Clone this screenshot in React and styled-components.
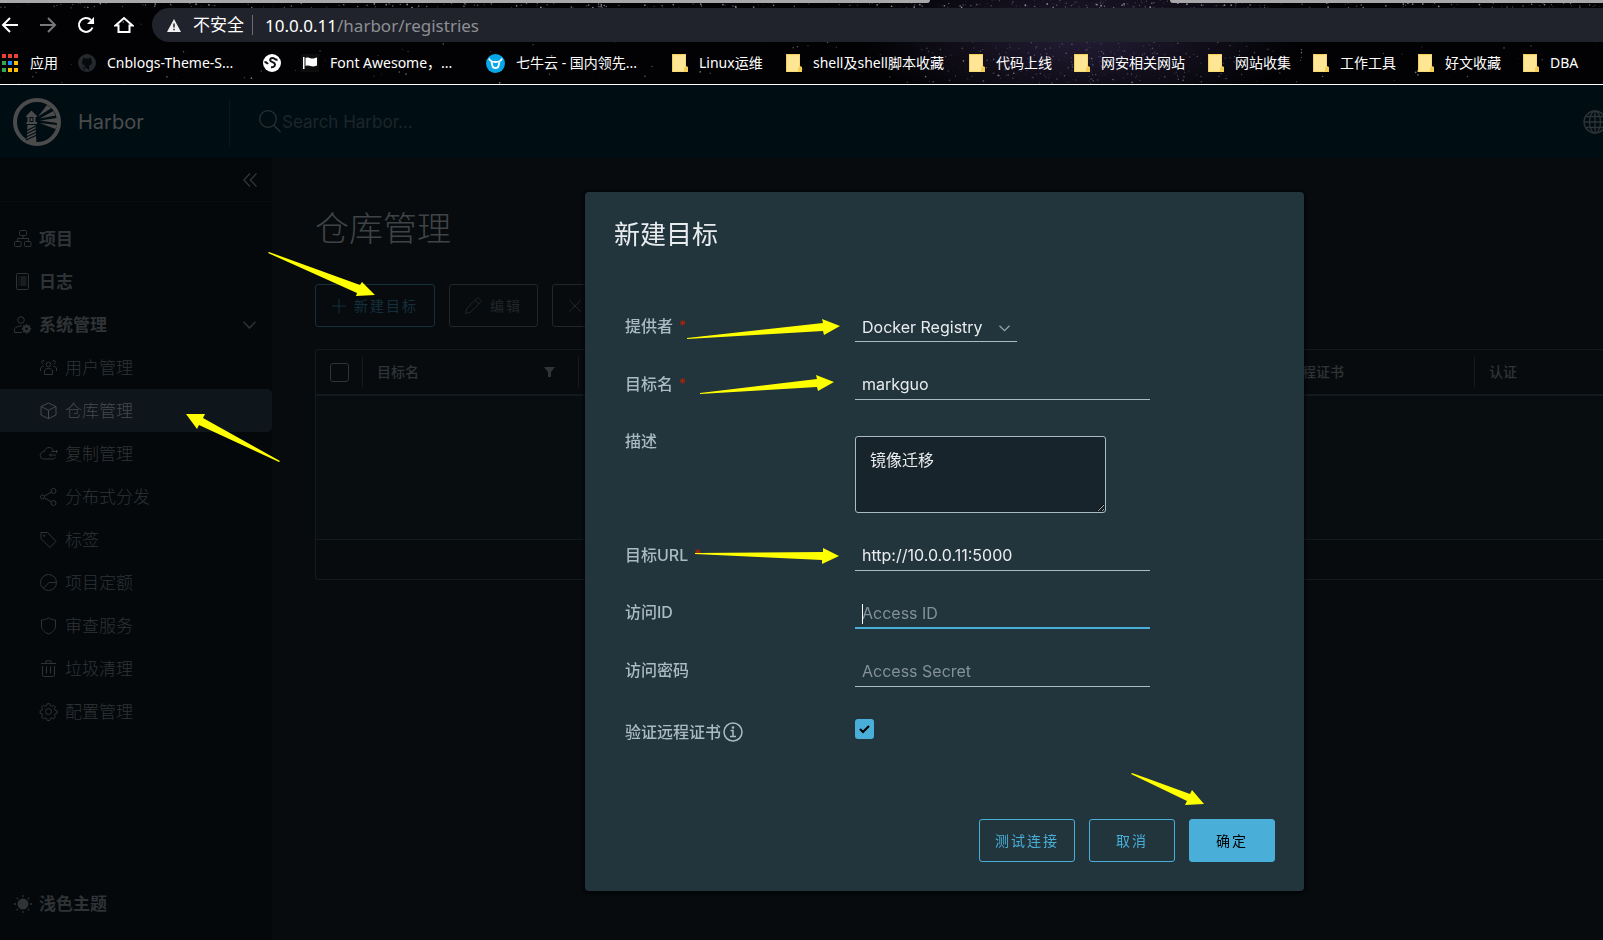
import styled, { createGlobalStyle, css } from "styled-components"

const GlobalStyle = createGlobalStyle`
*{
    box-sizing:border-box;
}
body{
    margin:0;
    background:#070b0e;
    font-family:Inter, "Noto Sans CJK SC", sans-serif;
    font-size:16px;
    overflow:hidden;
}
button, input, select, textarea{
    font-family:inherit;
    margin:0;
}
`

/* ---------- data ---------- */

const bookmarks = [
    { icon: "apps", text: "应用", room: 28 },
    { icon: "github", text: "Cnblogs-Theme-S...", room: 136 },
    { icon: "globe", text: "" },
    { icon: "flag", text: "Font Awesome，...", room: 136 },
    { icon: "qiniu", text: "七牛云 - 国内领先...", room: 136 },
    { icon: "folder", text: "Linux运维", room: 67 },
    { icon: "folder", text: "shell及shell脚本收藏", room: 136 },
    { icon: "folder", text: "代码上线", room: 58 },
    { icon: "folder", text: "网安相关网站", room: 87 },
    { icon: "folder", text: "网站收集", room: 58 },
    { icon: "folder", text: "工作工具", room: 58 },
    { icon: "folder", text: "好文收藏", room: 58 },
    { icon: "folder", text: "DBA", room: 28 },
]

const topMenu = [
    { icon: "project", text: "项目" },
    { icon: "log", text: "日志" },
    { icon: "admin", text: "系统管理", open: true },
]

const subMenu = [
    { icon: "users", text: "用户管理" },
    { icon: "cube", text: "仓库管理", active: true },
    { icon: "cloud", text: "复制管理" },
    { icon: "share", text: "分布式分发" },
    { icon: "tag", text: "标签" },
    { icon: "quota", text: "项目定额" },
    { icon: "shield", text: "审查服务" },
    { icon: "trash", text: "垃圾清理" },
    { icon: "cog", text: "配置管理" },
]

const arrows = [
    "269,252 360,285 362,282 375,295 356,296 357,293 268,253",
    "280,461 203,418 205,414 186,414 197,429 199,425 279,462",
    "687,338 823,323 822,319 840,326 824,335 823,331 687,339",
    "700,393 817,379 816,375 834,382 818,391 817,387 700,394",
    "695,553 823,552 823,548 839,556 822,564 822,560 695,554",
    "1132,773 1190,794 1192,790 1204,804 1185,805 1187,801 1131,774",
]

/* ---------- icons ---------- */

const menuIcons = {
    project: (
        <>
            <rect x="5.5" y="0.5" width="7" height="5" rx="1" />
            <path d="M9 5.5v3M3.5 11V8.5h11V11" />
            <rect x="0.5" y="11.5" width="6.5" height="5" rx="1" />
            <rect x="10.5" y="11.5" width="6.5" height="5" rx="1" />
        </>
    ),
    log: (
        <>
            <rect x="2.5" y="0.5" width="12" height="16" rx="1" />
            <path d="M6.5 4h6M6.5 6h6M6.5 8h6M6.5 10h6M6.5 12h6M4.5 4h1M4.5 6h1M4.5 8h1M4.5 10h1M4.5 12h1" />
        </>
    ),
    admin: (
        <>
            <circle cx="7" cy="4" r="3.3" />
            <path d="M8 16.5H.5v-3.6C2 11 4.500 9.800 7.500 9.900" />
            <circle cx="12.500" cy="12.800" r="2.400" strokeWidth="2" />
            <path d="M12.500 8.200v2M12.500 15.400v2M7.900 12.800h2M15.100 12.800h2M9.300 9.600l1.300 1.300M14.400 14.700l1.300 1.300M9.300 16l1.300-1.300M14.400 10.900l1.300-1.300" strokeWidth="2" />
        </>
    ),
    users: (
        <>
            <circle cx="8.500" cy="5.500" r="2.300" />
            <path d="M4.500 15.500v-3.500c0-1.500 1.500-2.500 4-2.500s4 1 4 2.500v3.500z" />
            <path d="M5 2.500C4 .8 2 1.200 1.800 3c0 1 .5 1.900 1.600 2.200M12 2.500c1-1.700 3-1.300 3.200.5 0 1-.5 1.900-1.600 2.200M.5 12V9c.5-1 1.700-1.600 3.300-1.500M16.500 12V9c-.5-1-1.700-1.600-3.300-1.500" />
        </>
    ),
    cube: (
        <>
            <path d="M8.500 1 16 4.500v8.500L8.500 16.700 1 13V4.500z" />
            <path d="M1 4.500 8.500 8.300 16 4.500M8.500 8.300v8.400" />
        </>
    ),
    cloud: (
        <>
            <path d="M13.500 6C13 3.500 11 2.500 9 2.500 6.500 2.500 4.500 4.300 4.500 6.500 1.500 6.800.2 8.500.2 10.500c0 2 1.500 3.500 3.500 3.500h9c1.500 0 2.500-.8 3-2" />
            <path d="M11 6.500h6.500M16 5l1.500 1.500L16 8M16 10H9.500M11 8.500 9.500 10l1.500 1.500" />
        </>
    ),
    share: (
        <>
            <circle cx="2.500" cy="9" r="2" />
            <circle cx="13.500" cy="3" r="2.500" />
            <circle cx="13.500" cy="15" r="2.500" />
            <path d="M4.400 8l7-3.800M4.400 10l7 3.800" />
        </>
    ),
    tag: (
        <>
            <path d="M1 1.500h6.500l8.500 8.800-6 6.200-9-8.800z" />
            <circle cx="4.200" cy="4.700" r="0.700" />
        </>
    ),
    quota: (
        <>
            <circle cx="8.500" cy="8.500" r="8" />
            <path d="M16.500 8.500H9L3.500 14" />
        </>
    ),
    shield: <path d="M8.500.7C10.500 2.300 13 3 15.500 3v6c0 3.500-2.500 6-7 8-4.500-2-7-4.500-7-8V3c2.500 0 5-.7 7-2.300z" />,
    trash: (
        <>
            <path d="M1 3.500h15M6 3V.8h5V3M2.500 6v9.500c0 .6.400 1 1 1h10c.6 0 1-.4 1-1V6" />
            <path d="M6.500 6.500v7M10.500 6.500v7" />
        </>
    ),
    cog: (
        <>
            <circle cx="8.500" cy="8.500" r="3" />
            <path d="M7.200.7h2.600l.5 2 1.500.6 1.800-1 1.800 1.800-1 1.800.6 1.400 2 .5v2.500l-2 .5-.6 1.500 1 1.800-1.800 1.800-1.800-1-1.500.6-.5 2H7.200l-.5-2-1.500-.6-1.800 1-1.800-1.800 1-1.800-.6-1.500-1.900-.5V7.800l1.900-.5.6-1.400-1-1.800L3.400 2.300l1.800 1 1.500-.6z" />
        </>
    ),
    sun: (
        <>
            <circle cx="9" cy="9" r="5.500" fill="currentColor" stroke="none" />
            <path d="M9 0v2M9 16v2M0 9h2M16 9h2M2.700 2.700l1.300 1.300M14 14l1.300 1.300M2.700 15.300 4 14M14 4l1.300-1.300" strokeWidth="1.300" />
        </>
    ),
    event: <circle cx="8.500" cy="9.500" r="5.500" />,
}

const Glyph = styled.svg`
width:18px;
height:18px;
flex:none;
fill:none;
stroke:currentColor;
overflow:visible;
`

function MenuIcon({ name }) {
    return <Glyph viewBox="0 0 18 18" aria-hidden="true">{menuIcons[name]}</Glyph>
}

const appColors = ["#ea4335", "#ea4335", "#ea4335", "#34a853", "#1a8cff", "#fbbc05", "#34a853", "#fbbc05", "#fbbc05"]

function BookmarkIcon({ name }) {
    if (name === "apps") {
        return (
            <svg width="17" height="18" viewBox="0 0 17 18">
                {appColors.map((c, i) => (
                    <rect key={i} x={(i % 3) * 6} y={Math.floor(i / 3) * 7} width="4" height="4" fill={c} />
                ))}
            </svg>
        )
    }
    if (name === "github") {
        return (
            <svg width="18" height="18" viewBox="0 0 20 20">
                <circle cx="10" cy="10" r="10" fill="#24292e" />
                <path d="M7.500 18v-3c-2 .5-2.500-1-3.500-1.500M12.500 18v-3.500c0-.8-.2-1.200-.6-1.500 2.200-.3 3.600-1.400 3.600-4 0-1-.3-1.900-1-2.500.2-.8.100-1.500-.2-2.200-1 0-1.700.5-2.300.9a8 8 0 0 0-4 0c-.6-.4-1.300-.9-2.300-.9-.3.700-.4 1.400-.2 2.200-.7.6-1 1.500-1 2.500 0 2.600 1.400 3.700 3.600 4-.4.300-.6.700-.6 1.500" fill="#08090a" />
            </svg>
        )
    }
    if (name === "globe") {
        return (
            <svg width="18" height="18" viewBox="0 0 18 18">
                <circle cx="9" cy="9" r="9" fill="#fff" />
                <path d="M14.500 5.500C12 6.500 12 4 9.500 4 7.500 4 6.500 5.500 7.500 7c1 1.500 4.500 1 4.500 3.500 0 2-2 3-4 2.800M1.500 8c1.500 0 2.500.6 3.500 2" fill="none" stroke="#111" strokeWidth="2" />
            </svg>
        )
    }
    if (name === "flag") {
        return (
            <svg width="18" height="18" viewBox="0 0 18 18">
                <rect width="18" height="18" fill="#0d0d0d" />
                <path d="M2 3h1.500v12H2zM4.500 4c2.500-1.200 4 .2 6 .5 2 .2 3.500-.5 5.500-1v8c-2 .8-3.700 1.200-5.700.8-2-.4-3.500-1.300-5.800-.3z" fill="#fff" />
            </svg>
        )
    }
    if (name === "qiniu") {
        return (
            <svg width="19" height="19" viewBox="0 0 19 19">
                <circle cx="9.500" cy="9.500" r="9.500" fill="#06a8ea" />
                <path d="M3 4.500c1 3 3.500 3.500 6.500 3.500S15 7.500 16 4.500M5.500 8l1 4c.3 1.600 1 2 3 2s2.700-.4 3-2l1-4" fill="none" stroke="#fff" strokeWidth="1.800" />
            </svg>
        )
    }
    return (
        <svg width="16" height="18" viewBox="0 0 16 18">
            <path d="M0 0h14v12l2 1v5H0z" fill="#f3cf55" />
            <path d="M1 1h12.500v11.500L12 14v3.500H1z" fill="#ffe694" />
        </svg>
    )
}

function HarborLogo() {
    return (
        <svg width="48" height="48" viewBox="0 0 48 48" aria-hidden="true">
            <circle cx="24" cy="24" r="22" fill="none" stroke="#4b4b4b" strokeWidth="4" />
            <g fill="#4b4b4b">
                <path d="M13 18l5.500-5.500L24 18v1H13zM14.500 19h2v5h-2zM20.500 19h2v5h-2zM17.500 20h2v3h-2zM13.500 24h10.500v2H13.500z" />
                <path d="M14.500 27h8l1 19-10-2z" />
                <path d="M25 18.500 34 7l4.500 3zM26.500 20.500 40.500 13l2 4.500zM27 22.500l17-2.500v5zM26.500 25l17.500 2-1.500 4z" />
            </g>
            <path d="M13 33l10-5M13 36l10-5M13 39l11-5M13 42l11-5" stroke="#000e14" strokeWidth="1.200" />
        </svg>
    )
}

/* ---------- browser bars ---------- */

const Browser = styled.header`
position:relative;
background:#020204;
border-bottom:1px solid #fff;
overflow:hidden;
font-family:"Noto Sans", "Noto Sans CJK SC", sans-serif;
`
const Sky = styled.svg`
position:absolute;
inset:0;
width:100%;
height:100%;
`
const TabEdges = styled.div`
position:relative;
display:flex;
justify-content:space-between;
height:3px;
margin-bottom:5px;
`
const TabEdge = styled.div`
width:${p => p.$width};
background:#a8a8aa;
border-radius:${p => p.$round};
`
const Toolbar = styled.div`
position:relative;
display:flex;
align-items:center;
height:34px;
`
const NavButton = styled.button`
display:flex;
align-items:center;
justify-content:center;
width:20px;
height:24px;
margin-right:18px;
padding:0;
border:0;
background:none;
color:${p => (p.$dim ? "#77787b" : "#fff")};
`
const AddressBar = styled.div`
flex:1;
display:flex;
align-items:center;
height:34px;
padding-left:15px;
border-radius:17px 0 0 17px;
background:#20232b;
color:#fff;
font-size:17px;
`
const Insecure = styled.span`
margin-left:12px;
padding-right:8px;
border-right:1px solid #6a6c72;
line-height:20px;
`
const Url = styled.span`
margin-left:12px;
color:#8d8f94;

b{
    font-weight:400;
    color:#fff;
}
`
const BookmarkBar = styled.nav`
position:relative;
display:flex;
align-items:center;
gap:20px;
height:42px;
padding-left:2px;
white-space:nowrap;
`
const Bookmark = styled.a`
display:flex;
align-items:center;
gap:11px;
flex:none;
color:#fff;
font-size:14px;
line-height:20px;
text-decoration:none;
`
const BookmarkText = styled.span`
min-width:${p => p.$room}px;
`

function makeStars() {
    const list = []
    let seed = 7
    const rnd = () => {
        seed = (seed * 16807) % 2147483647
        return seed / 2147483647
    }
    for (let i = 0; i < 240; i++) list.push([rnd() * 1603, rnd() * 84, rnd(), "#aaaec0"])
    // denser band of the milky way
    for (let i = 0; i < 650; i++) {
        list.push([860 + (rnd() + rnd()) * 230, rnd() * 84, rnd() * 0.8, "#8f86ac"])
    }
    // bright row along the tab strip
    for (let i = 0; i < 260; i++) list.push([rnd() * 1603, 3 + rnd() * 5, rnd(), "#cfd2e6"])
    return list
}
const stars = makeStars()

function BrowserBars() {
    return (
        <Browser>
            <Sky aria-hidden="true">
                <defs>
                    <radialGradient id="nebula">
                        <stop offset="0" stopColor="#241d36" />
                        <stop offset="1" stopColor="#241d36" stopOpacity="0" />
                    </radialGradient>
                </defs>
                <ellipse cx="1080" cy="36" rx="220" ry="80" fill="url(#nebula)" />
                {stars.map(([x, y, s, c], i) => (
                    <circle key={i} cx={x} cy={y} r={0.4 + s * 0.5} fill={c} opacity={0.15 + s * 0.5} />
                ))}
            </Sky>
            <TabEdges>
                <TabEdge $width="58%" $round="0 0 4px 0" />
                <TabEdge $width="27%" $round="0 0 0 4px" />
            </TabEdges>
            <Toolbar>
                <NavButton aria-label="后退">
                    <svg width="18" height="18" viewBox="0 0 18 18" fill="none" stroke="currentColor" strokeWidth="2">
                        <path d="M17 9H2M9 2 2 9l7 7" />
                    </svg>
                </NavButton>
                <NavButton $dim aria-label="前进">
                    <svg width="18" height="18" viewBox="0 0 18 18" fill="none" stroke="currentColor" strokeWidth="2">
                        <path d="M1 9h15M9 2l7 7-7 7" />
                    </svg>
                </NavButton>
                <NavButton aria-label="刷新">
                    <svg width="18" height="18" viewBox="0 0 18 18" fill="none" stroke="currentColor" strokeWidth="2">
                        <path d="M15.500 11.500A7 7 0 1 1 14 4" />
                        <path d="M17 1v7h-7z" fill="currentColor" stroke="none" />
                    </svg>
                </NavButton>
                <NavButton aria-label="主页">
                    <svg width="20" height="18" viewBox="0 0 20 18" fill="none" stroke="currentColor" strokeWidth="2">
                        <path d="M1.500 9.500 10 2l8.500 7.500h-3V16h-11V9.500z" />
                    </svg>
                </NavButton>
                <AddressBar>
                    <svg width="14" height="13" viewBox="0 0 14 13" aria-hidden="true">
                        <path d="M7 0l7 13H0z" fill="#f1f1f1" />
                        <path d="M7 4.500v4M7 9.700v1.500" stroke="#20232b" strokeWidth="1.500" />
                    </svg>
                    <Insecure>不安全</Insecure>
                    <Url><b>10.0.0.11</b>/harbor/registries</Url>
                </AddressBar>
            </Toolbar>
            <BookmarkBar aria-label="书签">
                {bookmarks.map((b, i) => (
                    <Bookmark key={i} href="#" aria-label={b.text || "网站"}>
                        <BookmarkIcon name={b.icon} />
                        {b.text && <BookmarkText $room={b.room}>{b.text}</BookmarkText>}
                    </Bookmark>
                ))}
            </BookmarkBar>
        </Browser>
    )
}

/* ---------- harbor header ---------- */

const Page = styled.div`
display:flex;
flex-direction:column;
height:100vh;
overflow:hidden;
`
const HarborHeader = styled.div`
display:flex;
align-items:center;
flex:none;
height:73px;
padding-left:13px;
background:#000e14;
overflow:hidden;
`
const Brand = styled.a`
display:flex;
align-items:center;
gap:17px;
width:217px;
height:48px;
border-right:1px solid #0a171d;
color:#4b4c4d;
font-size:20px;
line-height:24px;
text-decoration:none;
`
const SearchBox = styled.label`
display:flex;
align-items:center;
flex:1;
gap:1px;
margin-left:29px;
color:#2c3236;
`
const SearchInput = styled.input`
width:300px;
padding:0;
border:0;
outline:0;
background:none;
font-size:17px;
line-height:24px;

&::placeholder{
    color:#1c252a;
    opacity:1;
}
`
const Language = styled.button`
flex:none;
width:20px;
height:24px;
padding:0;
border:0;
background:none;
color:#2e3436;
overflow:hidden;
`

/* ---------- side menu ---------- */

const Columns = styled.div`
display:flex;
flex:1;
min-height:0;
`
const Side = styled.nav`
display:flex;
flex-direction:column;
flex:none;
width:272px;
background:#04080b;
color:#2f3336;
overflow:hidden;
`
const CollapseRow = styled.div`
display:flex;
align-items:center;
justify-content:flex-end;
flex:none;
height:44px;
padding-right:15px;
margin-bottom:15px;
border-bottom:1px solid #080d10;
`
const IconButton = styled.button`
display:flex;
padding:0;
border:0;
background:none;
color:#34383b;
`
const MenuLink = styled.a`
display:flex;
align-items:center;
flex:none;
gap:7px;
height:43px;
padding:0 16px 0 14px;
color:inherit;
font-size:17px;
line-height:24px;
font-weight:700;
text-decoration:none;

${p => p.$sub && css`
padding-left:40px;
font-weight:300;
`}
${p => p.$active && css`
background:#0e151b;
border-radius:0 5px 5px 0;
color:#47494b;
`}
`
const Chevron = styled.svg`
margin-left:auto;
`
const SideFoot = styled.div`
margin-top:auto;
height:58px;
flex:none;
`

/* ---------- registries page ---------- */

const Main = styled.main`
flex:1;
min-width:0;
padding:51px 0 0 43px;
color:#303436;
overflow:hidden;
`
const PageTitle = styled.h2`
margin:0 0 35px;
color:#404345;
font-size:34px;
line-height:40px;
font-weight:300;
`
const Actions = styled.div`
display:flex;
gap:14px;
margin-bottom:22px;
`
const Button = styled.button`
display:flex;
align-items:center;
justify-content:center;
gap:8px;
min-width:86px;
height:43px;
padding:0 15px;
border:1px solid currentColor;
border-radius:3px;
background:none;
color:#49afd9;
font-size:14px;
line-height:20px;
letter-spacing:2px;
white-space:nowrap;

${p => p.$primary && css`
background:#49afd9;
border-color:#49afd9;
color:#000;
`}
${p => p.$dim && css`
padding:0 16px;
color:#14303c;
`}
${p => p.$disabled && css`
color:#222628;
`}
`
const Grid = styled.div`
border:1px solid #13191c;
border-right:0;
border-radius:3px 0 0 3px;
`
const RegistryTable = styled.table`
width:100%;
table-layout:fixed;
border-collapse:collapse;
`
const HeadCell = styled.th`
width:${p => p.$width};
height:45px;
padding:0;
border-bottom:2px solid #13191c;
font-size:14px;
line-height:30px;
font-weight:500;
text-align:left;
`
const HeadInner = styled.div`
display:flex;
align-items:center;
justify-content:space-between;
height:30px;
padding:0 23px 0 14px;
border-left:${p => (p.$first ? 0 : "1px solid #161b1e")};
`
const EmptyCell = styled.td`
height:144px;
background:#080d0f;
`
const FootCell = styled.td`
height:40px;
border-top:1px solid #13191c;
`
const CheckAll = styled.input`
appearance:none;
flex:none;
width:19px;
height:19px;
border:1px solid #303436;
border-radius:3px;
`

/* ---------- dialog ---------- */

const Dialog = styled.section`
position:fixed;
top:192px;
left:585px;
width:719px;
padding:27px 29px 29px;
border-radius:4px;
background:#22343c;
box-shadow:0 1px 3px 2px rgba(0,0,0,0.5);
color:#e9ecef;
`
const DialogTitle = styled.h3`
margin:0 0 62px;
font-size:26px;
line-height:32px;
font-weight:400;
`
const Form = styled.form`
display:grid;
grid-template-columns:230px 1fr;
row-gap:29px;
padding-left:11px;
`
const Label = styled.label`
color:#acbac3;
font-size:16px;
line-height:25px;
font-weight:500;
`
const CertLabel = styled(Label)`
display:flex;
align-items:center;
gap:2px;
line-height:32px;
`
const Star = styled.span`
margin-left:6px;
color:#b02406;
font-size:14px;
vertical-align:1px;
`
const lineField = css`
display:block;
height:29px;
padding:0 7px;
border:0;
border-bottom:1px solid #acbac3;
border-radius:0;
outline:0;
background:none;
color:#e9ecef;
font-size:16px;
line-height:24px;
`
const Field = styled.div`
position:relative;
width:${p => p.$width || "295px"};
`
const TextInput = styled.input`
${lineField}
width:100%;
padding-bottom:2px;

&::placeholder{
    color:#84919a;
    opacity:1;
}
${p => p.$focused && css`
border-bottom:2px solid #49afd9;
`}
`
const Caret = styled.span`
position:absolute;
top:4px;
left:7px;
width:1px;
height:20px;
background:#fff;
`
const Select = styled.select`
${lineField}
appearance:none;
width:100%;
`
const SelectArrow = styled.svg`
position:absolute;
right:7px;
top:12px;
pointer-events:none;
`
const Description = styled.textarea`
display:block;
width:251px;
height:77px;
margin-top:7px;
padding:11px 14px;
border:1px solid #acbac3;
border-radius:3px;
outline:0;
background:#17242b;
color:#e9ecef;
font-size:16px;
line-height:24px;
`
const CheckWrap = styled.div`
display:grid;
width:19px;
height:20px;
margin-top:3px;

&>*{
    grid-area:1 / 1;
}
svg{
    pointer-events:none;
    place-self:center;
}
`
const Check = styled.input`
appearance:none;
width:19px;
height:20px;
border-radius:3px;
background:#49afd9;
`
const DialogFoot = styled.div`
display:flex;
justify-content:flex-end;
gap:14px;
margin-top:71px;
`
const Marks = styled.svg`
position:fixed;
inset:0;
width:100%;
height:100%;
fill:#ffff00;
pointer-events:none;
`

function RegistryDialog() {
    return (
        <Dialog role="dialog" aria-labelledby="dialog-title">
            <DialogTitle id="dialog-title">新建目标</DialogTitle>
            <Form id="registry-form">
                <Label htmlFor="provider">提供者<Star>*</Star></Label>
                <Field $width="162px">
                    <Select id="provider">
                        <option>Docker Registry</option>
                    </Select>
                    <SelectArrow width="11" height="7" viewBox="0 0 11 7" fill="none" stroke="#98a3a9" strokeWidth="1.300">
                        <path d="M.5.700l5 5 5-5" />
                    </SelectArrow>
                </Field>
                <Label htmlFor="name">目标名<Star>*</Star></Label>
                <Field><TextInput id="name" defaultValue="markguo" /></Field>
                <Label htmlFor="description">描述</Label>
                <Description id="description" defaultValue="镜像迁移" spellCheck="false" />
                <Label htmlFor="url">目标URL<Star>*</Star></Label>
                <Field><TextInput id="url" defaultValue="http://10.0.0.11:5000" /></Field>
                <Label htmlFor="access-id">访问ID</Label>
                <Field>
                    <TextInput id="access-id" placeholder="Access ID" $focused />
                    <Caret />
                </Field>
                <Label htmlFor="access-secret">访问密码</Label>
                <Field><TextInput id="access-secret" type="password" placeholder="Access Secret" /></Field>
                <CertLabel htmlFor="cert">
                    验证远程证书
                    <svg width="20" height="20" viewBox="0 0 20 20" fill="none" stroke="#acbac3" strokeWidth="1.500">
                        <circle cx="10" cy="10" r="9" />
                        <path d="M7.500 8.500H10v6M7 14.500h6" />
                        <circle cx="10" cy="5.500" r="0.600" fill="#acbac3" />
                    </svg>
                </CertLabel>
                <CheckWrap>
                    <Check id="cert" type="checkbox" defaultChecked />
                    <svg width="11" height="9" viewBox="0 0 11 9" fill="none" stroke="#000" strokeWidth="2.200">
                        <path d="M1 4l3 3 6-6" />
                    </svg>
                </CheckWrap>
            </Form>
            <DialogFoot>
                <Button type="button">测试连接</Button>
                <Button type="button">取消</Button>
                <Button type="submit" form="registry-form" $primary>确定</Button>
            </DialogFoot>
        </Dialog>
    )
}

export default function App() {
    return (
        <Page>
            <GlobalStyle />
            <BrowserBars />
            <HarborHeader>
                <Brand href="#"><HarborLogo />Harbor</Brand>
                <SearchBox>
                    <svg width="22" height="23" viewBox="0 0 22 23" fill="none" stroke="currentColor" strokeWidth="1.200">
                        <circle cx="9" cy="9" r="8.300" />
                        <path d="M15 15.500l6.500 6.500" />
                    </svg>
                    <SearchInput placeholder="Search Harbor..." aria-label="Search Harbor" />
                </SearchBox>
                <Language aria-label="语言">
                    <svg width="24" height="24" viewBox="0 0 24 24" fill="none" stroke="currentColor" strokeWidth="1.300">
                        <circle cx="12" cy="12" r="11" />
                        <ellipse cx="12" cy="12" rx="5.500" ry="11" />
                        <path d="M12 1v22M1 12h22M3 6.500h18M3 17.500h18" />
                    </svg>
                </Language>
            </HarborHeader>
            <Columns>
                <Side>
                    <CollapseRow>
                        <IconButton aria-label="收起">
                            <svg width="14" height="14" viewBox="0 0 14 14" fill="none" stroke="currentColor" strokeWidth="1.200">
                                <path d="M7 .5.800 7 7 13.500M13.500.5 7.300 7l6.200 6.500" />
                            </svg>
                        </IconButton>
                    </CollapseRow>
                    {topMenu.map(m => (
                        <MenuLink key={m.icon} href="#">
                            <MenuIcon name={m.icon} />
                            {m.text}
                            {m.open && (
                                <Chevron width="13" height="8" viewBox="0 0 13 8" fill="none" stroke="currentColor" strokeWidth="1.500">
                                    <path d="M.5.700l6 6.300 6-6.300" />
                                </Chevron>
                            )}
                        </MenuLink>
                    ))}
                    {subMenu.map(m => (
                        <MenuLink key={m.icon} href="#" $sub $active={m.active}>
                            <MenuIcon name={m.icon} />
                            {m.text}
                        </MenuLink>
                    ))}
                    <SideFoot>
                        <MenuLink href="#"><MenuIcon name="sun" />浅色主题</MenuLink>
                        <MenuLink href="#" aria-label="事件日志"><MenuIcon name="event" /></MenuLink>
                    </SideFoot>
                </Side>
                <Main>
                    <PageTitle>仓库管理</PageTitle>
                    <Actions>
                        <Button $dim>
                            <svg width="14" height="14" viewBox="0 0 14 14" stroke="currentColor">
                                <path d="M7 0v14M0 7h14" />
                            </svg>
                            新建目标
                        </Button>
                        <Button $disabled>
                            <svg width="17" height="17" viewBox="0 0 17 17" fill="none" stroke="currentColor">
                                <path d="M.5 16.500l1.200-5L12 1.200c.6-.6 1.200-.6 1.800 0l2 2c.6.6.6 1.200 0 1.800L5.500 15.300zM10 3l4 4" />
                            </svg>
                            编辑
                        </Button>
                        <Button $disabled>
                            <svg width="12" height="12" viewBox="0 0 12 12" stroke="currentColor">
                                <path d="M.5.500l11 11M11.500.500l-11 11" />
                            </svg>
                            删除
                        </Button>
                    </Actions>
                    <Grid>
                        <RegistryTable>
                            <thead>
                                <tr>
                                    <HeadCell $width="46px">
                                        <HeadInner $first><CheckAll type="checkbox" aria-label="全选" /></HeadInner>
                                    </HeadCell>
                                    <HeadCell $width="216px">
                                        <HeadInner>
                                            目标名
                                            <svg width="11" height="10" viewBox="0 0 11 10" fill="currentColor">
                                                <path d="M0 0h11L7 5v5H4V5z" />
                                            </svg>
                                        </HeadInner>
                                    </HeadCell>
                                    <HeadCell $width="222px"><HeadInner>状态</HeadInner></HeadCell>
                                    <HeadCell $width="222px"><HeadInner>目标URL</HeadInner></HeadCell>
                                    <HeadCell $width="223px"><HeadInner>提供者</HeadInner></HeadCell>
                                    <HeadCell $width="229px"><HeadInner>验证远程证书</HeadInner></HeadCell>
                                    <HeadCell><HeadInner>认证</HeadInner></HeadCell>
                                </tr>
                            </thead>
                            <tbody>
                                <tr><EmptyCell colSpan={7} /></tr>
                            </tbody>
                            <tfoot>
                                <tr><FootCell colSpan={7} /></tr>
                            </tfoot>
                        </RegistryTable>
                    </Grid>
                </Main>
            </Columns>
            <RegistryDialog />
            <Marks aria-hidden="true">
                {arrows.map(points => <polygon key={points} points={points} />)}
            </Marks>
        </Page>
    )
}
